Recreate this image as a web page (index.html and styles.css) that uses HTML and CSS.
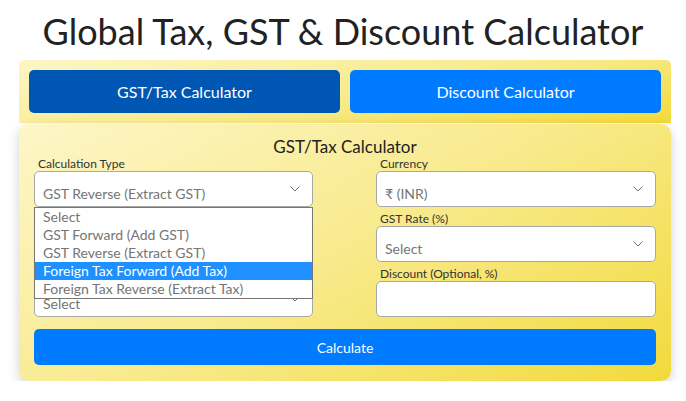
FILE: index.html
```html
<!DOCTYPE html>
<html lang="en">
<head>
<meta charset="utf-8">
<title>Global Tax, GST &amp; Discount Calculator</title>
<link rel="stylesheet" href="styles.css">
</head>
<body>
<h1 class="page-title">Global Tax, GST &amp; Discount Calculator</h1>
<div class="wrap">
  <div class="tabs">
    <button class="tab tab-active">GST/Tax Calculator</button>
    <button class="tab">Discount Calculator</button>
  </div>
  <div class="card">
    <h2 class="card-title">GST/Tax Calculator</h2>
    <div class="grid">
      <div class="col">
        <div class="field">
          <label class="label">Calculation Type</label>
          <div class="select-wrap">
            <div class="select">GST Reverse (Extract GST)<svg class="chev" width="10" height="6" viewBox="0 0 10 6"><polyline points="0.5,0.5 5,5 9.5,0.5" fill="none" stroke="#707070" stroke-width="1"/></svg></div>
            <ul class="dropdown">
              <li class="opt">Select</li>
              <li class="opt">GST Forward (Add GST)</li>
              <li class="opt">GST Reverse (Extract GST)</li>
              <li class="opt opt-hl">Foreign Tax Forward (Add Tax)</li>
              <li class="opt">Foreign Tax Reverse (Extract Tax)</li>
            </ul>
          </div>
        </div>
        <div class="field">
          <span class="label label-empty"></span>
          <div class="select select-empty"><svg class="chev" width="10" height="6" viewBox="0 0 10 6"><polyline points="0.5,0.5 5,5 9.5,0.5" fill="none" stroke="#707070" stroke-width="1"/></svg></div>
        </div>
        <div class="field">
          <span class="label label-empty"></span>
          <div class="select">Select<svg class="chev" width="10" height="6" viewBox="0 0 10 6"><polyline points="0.5,0.5 5,5 9.5,0.5" fill="none" stroke="#707070" stroke-width="1"/></svg></div>
        </div>
      </div>
      <div class="col">
        <div class="field">
          <label class="label">Currency</label>
          <div class="select">₹ (INR)<svg class="chev" width="10" height="6" viewBox="0 0 10 6"><polyline points="0.5,0.5 5,5 9.5,0.5" fill="none" stroke="#707070" stroke-width="1"/></svg></div>
        </div>
        <div class="field">
          <label class="label">GST Rate (%)</label>
          <div class="select">Select<svg class="chev" width="10" height="6" viewBox="0 0 10 6"><polyline points="0.5,0.5 5,5 9.5,0.5" fill="none" stroke="#707070" stroke-width="1"/></svg></div>
        </div>
        <div class="field">
          <label class="label">Discount (Optional, %)</label>
          <div class="input"></div>
        </div>
      </div>
    </div>
    <button class="calc">Calculate</button>
  </div>
</div>
</body>
</html>
```
FILE: styles.css
```css
* { box-sizing: border-box; }
html, body { margin: 0; padding: 0; background: #fff; }
body { font-family: Lato, "Noto Sans", sans-serif; color: #222; }

.page-title {
  margin: 0;
  padding-top: 11px;
  height: 60px;
  font-size: 36px;
  line-height: 40px;
  font-weight: 400;
  text-align: center;
  color: #222;
}

.wrap {
  margin-left: 19px;
  width: 652px;
}

.tabs {
  display: flex;
  gap: 10px;
  padding: 10px;
  border-radius: 5px 5px 0 0;
  background: linear-gradient(170deg, #fdf6c6 0%, #f8ea8a 55%, #f2da3a 100%);
}

.tab {
  flex: 1;
  height: 43px;
  border: 0;
  border-radius: 5px;
  background: #007bff;
  color: #fff;
  font-family: Lato, "Noto Sans", sans-serif;
  font-size: 16px;
  padding: 0;
}
.tab-active { background: #0056b3; }

.card {
  margin-top: 1px;
  padding: 14px 15px 16px;
  border-radius: 10px;
  background: linear-gradient(150deg, #fdf6c8 0%, #f8ea8c 50%, #f2da3c 100%);
  box-shadow: 0 4px 12px rgba(0, 0, 0, 0.18);
}

.card-title {
  margin: 0;
  font-size: 17px;
  line-height: 17px;
  font-weight: 400;
  text-align: center;
  color: #222;
}

.grid {
  display: flex;
  justify-content: space-between;
}
.col { width: 280px; }
.col:first-child { width: 279px; }

.field { margin-top: 3px; }
.field:first-child { margin-top: 0; }

.label {
  display: block;
  height: 16px;
  font-size: 12px;
  line-height: 14px;
  padding: 2px 0 0 4px;
  color: #333;
}

.select-wrap { position: relative; }

.select, .input {
  position: relative;
  height: 36px;
  border: 1px solid #a8a8a8;
  border-radius: 5px;
  background: #fff;
  font-size: 14px;
  line-height: 14px;
  padding: 15px 0 0 8px;
  color: #757575;
}

.chev {
  position: absolute;
  right: 12px;
  top: 14px;
}

.dropdown {
  position: absolute;
  z-index: 5;
  left: 0;
  right: 0;
  top: 36px;
  margin: 0;
  padding: 0;
  list-style: none;
  background: #fff;
  border: 1px solid #767676;
}

.opt {
  height: 18px;
  line-height: 18px;
  font-size: 14px;
  padding-left: 8px;
  color: #757575;
  white-space: nowrap;
}
.opt-hl { background: #1e90ff; color: #fff; }

.calc {
  display: block;
  width: 100%;
  height: 36px;
  margin-top: 12px;
  border: 0;
  border-radius: 5px;
  background: #007bff;
  color: #fff;
  font-family: Lato, "Noto Sans", sans-serif;
  font-size: 14px;
  padding: 0;
}
```
